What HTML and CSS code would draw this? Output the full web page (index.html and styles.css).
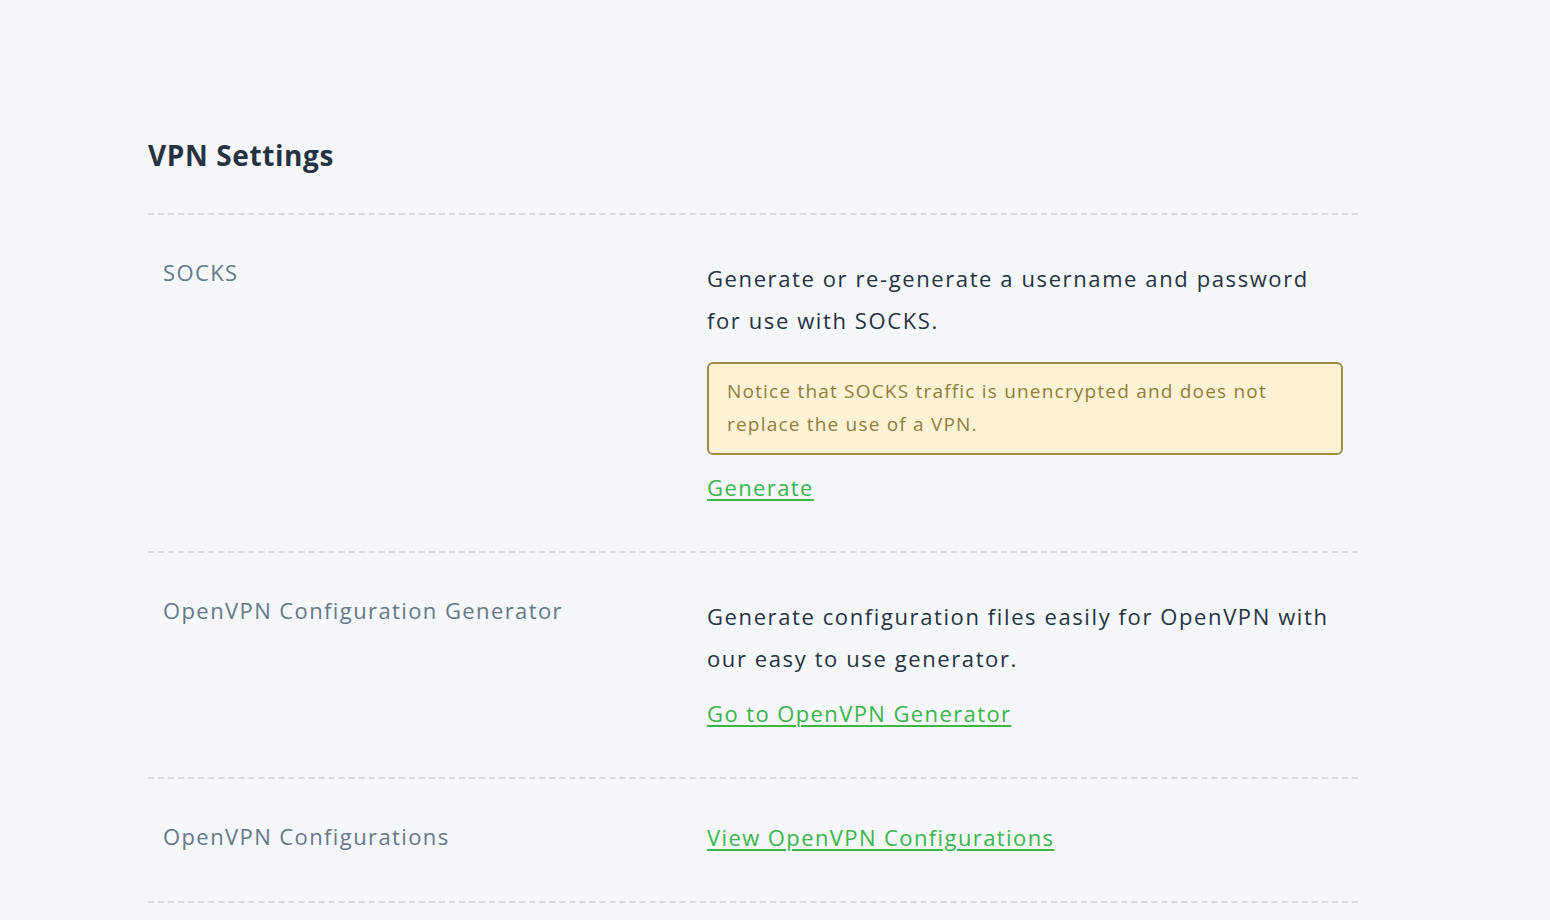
FILE: index.html
```html
<!DOCTYPE html>
<html lang="en">
<head>
  <meta charset="UTF-8" />
  <meta name="viewport" content="width=device-width, initial-scale=1" />
  <title>VPN Settings</title>
  <link rel="stylesheet" href="styles.css">
</head>
<body>

  <div class="container">
    <h2 class="page-title">VPN Settings</h2>

    <div class="settings">

      <div class="setting-row">
        <div class="setting-label">SOCKS</div>
        <div class="setting-body">
          <p>Generate or re-generate a username and password for use with SOCKS.</p>
          <div class="notice">Notice that SOCKS traffic is unencrypted and does not replace the use of a VPN.</div>
          <a href="#" class="action-link">Generate</a>
        </div>
      </div>

      <div class="setting-row">
        <div class="setting-label">OpenVPN Configuration Generator</div>
        <div class="setting-body">
          <p>Generate configuration files easily for OpenVPN with our easy to use generator.</p>
          <a href="#" class="action-link">Go to OpenVPN Generator</a>
        </div>
      </div>

      <div class="setting-row">
        <div class="setting-label">OpenVPN Configurations</div>
        <div class="setting-body">
          <a href="#" class="action-link">View OpenVPN Configurations</a>
        </div>
      </div>

    </div>
  </div>

</body>
</html>
```

FILE: styles.css
```css
body {
  margin: 0;
  font-family: "Open Sans", "Noto Sans", Arial, sans-serif;
  font-variant-ligatures: none;
  background-color: #f5f7fb;
  color: #263241;
}

.container {
  width: 1210px;
  margin: 0 auto 0 148px;
  padding-top: 135px;
}

.page-title {
  margin: 0 0 38px;
  font-size: 28px;
  line-height: 40px;
  font-weight: bold;
  letter-spacing: 0.6px;
  color: #263241;
}

.settings {
  border-top: 2px dashed #d5dae1;
}

.setting-row {
  display: grid;
  grid-template-columns: 544px 1fr;
  padding: 42px 15px 48px;
  border-bottom: 2px dashed #d5dae1;
}

.setting-label {
  font-size: 22px;
  line-height: 30px;
  letter-spacing: 1.4px;
  color: #66778a;
}

.setting-body p {
  margin: 0 0 18px;
  font-size: 22px;
  line-height: 42px;
  letter-spacing: 1.6px;
  color: #263241;
}

.notice {
  margin: 21px 0 16px;
  padding: 11px 18px 12px;
  background-color: #fef2d5;
  border: 2px solid #9e8c4a;
  border-radius: 6px;
  font-size: 19px;
  line-height: 33px;
  letter-spacing: 1.2px;
  color: #8f7e3c;
}

.action-link {
  display: inline-block;
  font-size: 22px;
  line-height: 32px;
  letter-spacing: 1.4px;
  color: #3bb54a;
  text-decoration: underline;
  text-decoration-thickness: 2px;
  text-underline-offset: 3px;
}
```
